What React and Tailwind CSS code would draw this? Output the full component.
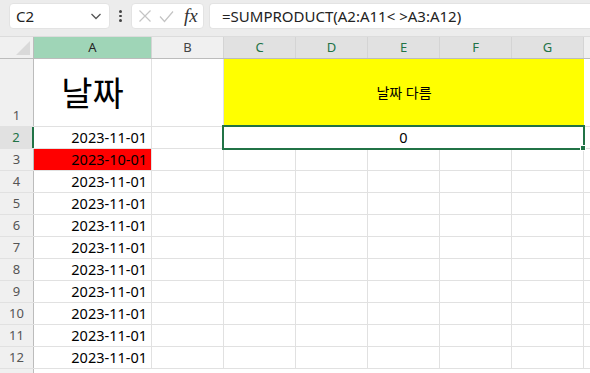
import React from "react";

const FONT = { fontFamily: '"Noto Sans", "Noto Sans CJK KR", sans-serif' };

const dates = [
  "2023-11-01",
  "2023-10-01",
  "2023-11-01",
  "2023-11-01",
  "2023-11-01",
  "2023-11-01",
  "2023-11-01",
  "2023-11-01",
  "2023-11-01",
  "2023-11-01",
  "2023-11-01",
];

function ColHeader({ label, w, variant }) {
  const bg =
    variant === "green"
      ? "bg-[#9fd5b7] text-[#262626]"
      : variant === "sel"
      ? "bg-[#e1e1e1] text-[#217346]"
      : "bg-[#f0f0f0] text-[#444]";
  return (
    <div
      className={`${w} h-full shrink-0 border-r border-[#d4d4d4] flex items-center justify-center text-[13px] ${bg}`}
    >
      {label}
    </div>
  );
}

function RowHeader({ n, sel, tall }) {
  return (
    <div
      className={`w-[34px] shrink-0 h-full flex justify-center text-[13px] border-r ${
        sel
          ? "bg-[#e1e1e1] text-[#217346] border-r-2 border-[#217346]"
          : "bg-[#f0f0f0] text-[#555] border-[#bcbcbc]"
      } ${tall ? "items-end pb-[1px]" : "items-center"}`}
    >
      {n}
    </div>
  );
}

function Cell({ w, children, className = "" }) {
  return (
    <div
      className={`${w} shrink-0 h-full border-r border-[#e1e1e1] flex items-center ${className}`}
    >
      {children}
    </div>
  );
}

export default function App() {
  return (
    <div
      className="relative w-[590px] h-[373px] overflow-hidden bg-white text-black"
      style={FONT}
    >
      {/* formula bar */}
      <div className="h-[37px] bg-[#ececec] flex items-start pt-[3px] pl-[9px] border-b border-[#dcdcdc]">
        <div className="w-[101px] h-[26px] bg-white rounded-[4px] border border-[#e3e3e3] flex items-center pl-[6px] pr-[7px] justify-between">
          <span className="text-[15px] text-[#222]">C2</span>
          <svg width="12" height="8" viewBox="0 0 12 8">
            <path d="M1.5 2 L6 6.5 L10.5 2" fill="none" stroke="#555" strokeWidth="1.3" />
          </svg>
        </div>
        <div className="w-[21px] h-[26px] flex flex-col items-center justify-center gap-[2px]">
          <span className="w-[2.5px] h-[2.5px] bg-[#444] rounded-full" />
          <span className="w-[2.5px] h-[2.5px] bg-[#444] rounded-full" />
          <span className="w-[2.5px] h-[2.5px] bg-[#444] rounded-full" />
        </div>
        <div className="w-[73px] h-[26px] bg-white rounded-[4px] border border-[#e3e3e3] flex items-center pl-[6px] gap-[7px]">
          <svg width="14" height="14" viewBox="0 0 14 14">
            <path d="M1.5 1.5 L12.5 12.5 M12.5 1.5 L1.5 12.5" stroke="#c4c4c4" strokeWidth="1.2" />
          </svg>
          <svg width="15" height="13" viewBox="0 0 15 13">
            <path d="M1 6.5 L5.5 11.5 L14 1.5" fill="none" stroke="#c4c4c4" strokeWidth="1.2" />
          </svg>
          <span
            className="text-[19px] italic text-[#333] leading-none ml-[3px] pb-[2px]"
            style={{ fontFamily: '"Liberation Serif", serif' }}
          >
            fx
          </span>
        </div>
        <div className="ml-[5px] flex-1 h-[26px] bg-white rounded-l-[4px] border border-r-0 border-[#e3e3e3] flex items-center pl-[12px]">
          <span className="text-[15px] text-[#222] whitespace-nowrap">
            =SUMPRODUCT(A2:A11&lt; &gt;A3:A12)
          </span>
        </div>
      </div>

      {/* column headers */}
      <div className="flex h-[22px] border-b border-[#bcbcbc]">
        <div className="w-[34px] shrink-0 h-full bg-[#f0f0f0] border-r border-[#bcbcbc] relative">
          <svg className="absolute right-[3px] bottom-[3px]" width="14" height="14" viewBox="0 0 14 14">
            <path d="M14 0 L14 14 L0 14 Z" fill="#d9d9d9" />
          </svg>
        </div>
        <ColHeader label="A" w="w-[118px]" variant="green" />
        <ColHeader label="B" w="w-[72px]" />
        <ColHeader label="C" w="w-[72px]" variant="sel" />
        <ColHeader label="D" w="w-[72px]" variant="sel" />
        <ColHeader label="E" w="w-[72px]" variant="sel" />
        <ColHeader label="F" w="w-[72px]" variant="sel" />
        <ColHeader label="G" w="w-[72px]" variant="sel" />
        <div className="flex-1 h-full bg-[#f0f0f0]" />
      </div>

      {/* row 1 */}
      <div className="flex h-[68px] border-b border-[#e1e1e1]">
        <RowHeader n="1" tall />
        <Cell w="w-[118px]" className="justify-center">
          <span className="text-[34px] font-normal leading-none pt-[1px]">날짜</span>
        </Cell>
        <Cell w="w-[72px]" />
        <div className="w-[360px] shrink-0 h-full bg-[#ffff00] flex items-center justify-center">
          <span className="text-[14px]">날짜 다름</span>
        </div>
        <div className="flex-1 h-full" />
      </div>

      {/* row 2 */}
      <div className="flex h-[22px] border-b border-[#e1e1e1]">
        <RowHeader n="2" sel />
        <Cell w="w-[118px]" className="justify-end pr-[4px]">
          <span className="text-[14.5px]">{dates[0]}</span>
        </Cell>
        <Cell w="w-[72px]" />
        <div className="w-[360px] shrink-0 h-full flex items-center justify-center border-r border-[#e1e1e1]">
          <span className="text-[14.5px]">0</span>
        </div>
        <div className="flex-1 h-full" />
      </div>

      {/* rows 3..13 */}
      {dates.slice(1).map((d, i) => (
        <div key={i} className="flex h-[22px] border-b border-[#e1e1e1]">
          <RowHeader n={String(i + 3)} />
          <Cell
            w="w-[118px]"
            className={`justify-end pr-[4px] ${i === 0 ? "bg-[#ff0000]" : ""}`}
          >
            <span className="text-[14.5px]">{d}</span>
          </Cell>
          <Cell w="w-[72px]" />
          <Cell w="w-[72px]" />
          <Cell w="w-[72px]" />
          <Cell w="w-[72px]" />
          <Cell w="w-[72px]" />
          <Cell w="w-[72px]" />
          <div className="flex-1 h-full" />
        </div>
      ))}
      <div className="flex h-[22px]">
        <RowHeader n="" />
      </div>

      {/* selection */}
      <div className="absolute left-[222px] top-[125px] w-[363px] h-[25px] border-2 border-[#217346] pointer-events-none" />
      <div className="absolute left-[580px] top-[145px] w-[6px] h-[6px] bg-[#217346] border border-white" />
    </div>
  );
}
